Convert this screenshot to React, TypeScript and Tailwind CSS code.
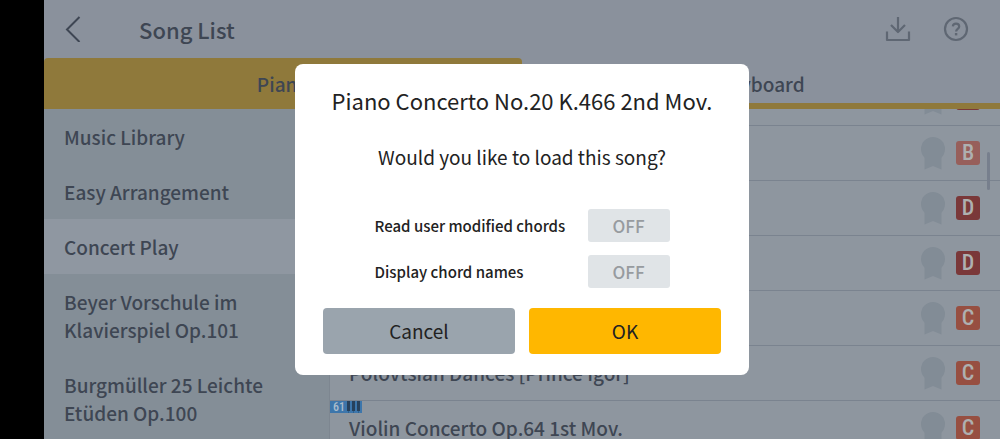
import { useState } from "react";

const categories = [
  "Music Library",
  "Easy Arrangement",
  "Concert Play",
  "Beyer Vorschule im Klavierspiel Op.101",
  "Burgmüller 25 Leichte Etüden Op.100",
];

const levelColors: Record<string, string> = {
  B: "bg-[#975f5b]",
  C: "bg-[#974f41]",
  D: "bg-[#7a3839]",
};

const songs = [
  { id: 1, title: "", level: "D" },
  { id: 2, title: "", level: "B" },
  { id: 3, title: "", level: "D" },
  { id: 4, title: "", level: "D" },
  { id: 5, title: "", level: "C" },
  { id: 6, title: "Polovtsian Dances [Prince Igor]", level: "C" },
  { id: 7, title: "Violin Concerto Op.64 1st Mov.", level: "C", keys: 61 },
];

function KeysTag({ keys }: { keys: number }) {
  return (
    <span className="absolute left-0 top-0 flex h-3 items-center gap-[2px] bg-[#3d76ab] pl-[3px] font-['Roboto_Condensed','Open_Sans_Condensed','Liberation_Sans',sans-serif] text-xs leading-3 text-[#a9bccb]">
      {keys}
      <svg width="15" height="12" viewBox="0 0 15 12" aria-hidden="true">
        <path d="M0 0h3v10H0zM5 0h3v10H5zM10 0h3v10h-3z" fill="#27415c" />
        <path d="M1.500 10v2M6.500 10v2M11.500 10v2" stroke="#2f608d" />
      </svg>
    </span>
  );
}

function Ribbon() {
  return (
    <svg width="24" height="33" viewBox="0 0 24 33" fill="#828c96" aria-hidden="true">
      <circle cx="12" cy="12" r="12" />
      <path d="M3.500 18h17v14.500L12 29l-8.500 3.500z" />
    </svg>
  );
}

function Toggle({ id, label }: { id: string; label: string }) {
  const [on, setOn] = useState(false);

  return (
    <div className="flex items-center justify-between">
      <label htmlFor={id} className="text-[15px] leading-6">
        {label}
      </label>
      <button
        id={id}
        type="button"
        role="switch"
        aria-checked={on}
        onClick={() => setOn(!on)}
        className="h-[33px] w-[82px] rounded-[3px] bg-[#e0e4e7] text-[17px] leading-6 text-[#979b9f]"
      >
        {on ? "ON" : "OFF"}
      </button>
    </div>
  );
}

function LoadSongDialog() {
  return (
    <div className="absolute inset-0 flex items-center justify-center">
      <div
        role="dialog"
        aria-modal="true"
        aria-labelledby="dialog-title"
        className="w-[454px] rounded-lg bg-white px-7 pb-[21px] pt-5 text-center text-[#222222]"
      >
        <h2 id="dialog-title" className="text-[22px] font-normal leading-8">
          Piano Concerto No.20 K.466 2nd Mov.
        </h2>
        <p className="mt-[25px] text-[19px] font-normal leading-8">Would you like to load this song?</p>
        <div className="mx-auto mt-9 flex w-[295px] flex-col gap-[13px] text-left">
          <Toggle id="user-chords" label="Read user modified chords" />
          <Toggle id="chord-names" label="Display chord names" />
        </div>
        <div className="mt-5 flex gap-[14px] text-[19px] font-normal leading-8">
          <button type="button" className="h-[46px] flex-1 rounded-[4px] bg-[#9aa4ad]">
            Cancel
          </button>
          <button type="button" className="h-[46px] flex-1 rounded-[4px] bg-[#ffb700]">
            OK
          </button>
        </div>
      </div>
    </div>
  );
}

export default function App() {
  const [selected, setSelected] = useState("Concert Play");

  return (
    <div className="h-screen overflow-hidden bg-black pl-11 font-['Noto_Sans_CJK_JP',sans-serif] font-medium text-[#3e4653]">
      <div className="relative flex h-full flex-col bg-[#8a919c]">
        <header className="flex h-[58px] shrink-0 items-center pl-5 pr-[31px]">
          <button type="button" aria-label="Back">
            <svg width="18" height="26" viewBox="0 0 18 26" fill="none" stroke="currentColor" strokeWidth="2">
              <path d="M15.500 1 3 13.500 15.500 26" />
            </svg>
          </button>
          <h1 className="ml-[57px] flex-1 text-[22px] leading-8">Song List</h1>
          <div className="flex items-center gap-8 text-[#5f6773]">
            <button type="button" aria-label="Download">
              <svg width="26" height="26" viewBox="0 0 26 26" fill="none" stroke="currentColor" strokeWidth="2.200" strokeLinejoin="round">
                <path d="M13 1v14.500M6 9l7 7 7-7M2 15.500V24h22v-8.500" />
              </svg>
            </button>
            <button type="button" aria-label="Help">
              <svg width="26" height="26" viewBox="0 0 26 26" fill="none" stroke="currentColor" strokeWidth="2.200">
                <circle cx="13" cy="13" r="11" />
                <path d="M9.800 10.400C10 8.600 11.300 7.700 13 7.700c1.900 0 3.200 1.100 3.200 2.700 0 2.300-3.100 2.500-3.100 5" />
                <path d="M11.900 17h2.400v2.400h-2.400z" fill="currentColor" stroke="none" />
              </svg>
            </button>
          </div>
        </header>

        <nav className="flex h-[51px] shrink-0 border-b-[6px] border-[#8f793b] text-[19px] leading-8">
          <button type="button" className="-mb-[6px] flex-1 rounded-t-[4px] bg-[#8f793b]">
            Piano
          </button>
          <button type="button" className="flex-1 pt-[6px]">
            Keyboard
          </button>
        </nav>

        <main className="flex min-h-0 flex-1">
          <aside className="w-[286px] shrink-0 overflow-hidden border-r border-[#7d8690] bg-[#848e97]">
            <ul>
              {categories.map((name) => (
                <li key={name}>
                  <button
                    type="button"
                    onClick={() => setSelected(name)}
                    className={`w-full pb-[13px] pl-5 pr-14 pt-[14px] text-left text-[19px] leading-7 ${
                      name === selected ? "bg-[#8f97a1]" : ""
                    }`}
                  >
                    {name}
                  </button>
                </li>
              ))}
            </ul>
          </aside>

          <section className="relative flex-1 overflow-hidden bg-[#8e969f]">
            <ul className="-mt-[38px]">
              {songs.map((song) => (
                <li
                  key={song.id}
                  className="relative flex h-[55px] items-center border-b border-[#7a838f] pl-[19px] pr-5"
                >
                  {song.keys && <KeysTag keys={song.keys} />}
                  <span className="flex-1 text-[19px] leading-8">{song.title}</span>
                  <Ribbon />
                  <span
                    className={`ml-[11px] flex size-6 items-center justify-center rounded-[3px] font-['Roboto_Condensed','Open_Sans_Condensed','Liberation_Sans',sans-serif] text-[22px] leading-6 text-[#aeb0b0] ${levelColors[song.level]}`}
                  >
                    {song.level}
                  </span>
                </li>
              ))}
            </ul>
            <div className="absolute right-[10px] top-[43px] h-[38px] w-[3px] rounded-full bg-[#777f8d]" />
          </section>
        </main>

        <LoadSongDialog />
      </div>
    </div>
  );
}
